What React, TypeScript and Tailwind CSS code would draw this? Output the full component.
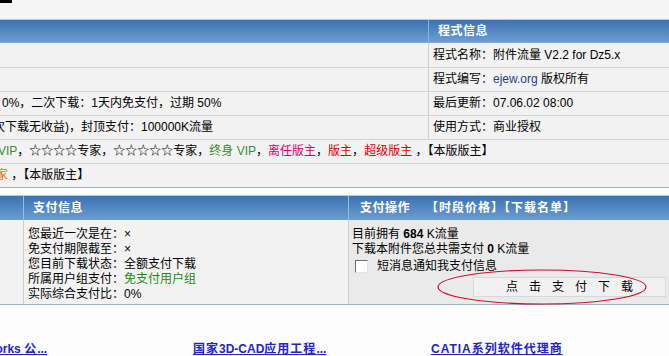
import React from 'react';

const font = "font-['Tahoma','Liberation_Sans','Noto_Sans_CJK_SC',sans-serif]";

const InfoRow = ({ left, right, h = 'h-[24px]' }: { left?: React.ReactNode; right?: React.ReactNode; h?: string }) => (
  <div className={`flex ${h} border-b border-[#d4d4d4]`}>
    <div className="w-[429px] border-r border-[#d0d0d0] flex items-center whitespace-nowrap overflow-hidden">{left}</div>
    <div className="flex-1 flex items-center pl-[4px] whitespace-nowrap">{right}</div>
  </div>
);

const WideRow = ({ children, last }: { children: React.ReactNode; last?: boolean }) => (
  <div
    className={`h-[24px] flex items-center whitespace-nowrap overflow-hidden border-b ${
      last ? 'border-[#a3afcc]' : 'border-[#d4d4d4]'
    }`}
  >
    {children}
  </div>
);

export default function App() {
  return (
    <div className={`${font} relative w-[669px] h-[356px] overflow-hidden bg-[#f5f5f5] text-[12px] leading-[15px] text-black`}>
      {/* top strip */}
      <div className="h-[19px]">
        <div className="w-[12px] h-[3px] bg-black" />
      </div>

      {/* program info table */}
      <div className="bg-[#f2f2f2]">
        <div className="flex h-[24px] border-t border-[#aecbe8] border-b border-b-[#86a6ca] bg-linear-to-b from-[#3b72b1] to-[#6c9dd2]">
          <div className="w-[429px] border-r border-[#90b2da]" />
          <div className="flex-1 flex items-center pl-[9px] pt-[1px] font-bold text-white tracking-[0.5px]">程式信息</div>
        </div>
        <InfoRow h="h-[25px]" right={<span className="pt-[1px]">程式名称：附件流量 V2.2 for Dz5.x</span>} />
        <InfoRow
          right={
            <span>
              程式编写：<span className="text-[#1f3f8f]">ejew.org</span> 版权所有
            </span>
          }
        />
        <InfoRow
          left={<span className="pl-[2px]">0%，二次下载：1天内免支付，过期 50%</span>}
          right={<span>最后更新：07.06.02 08:00</span>}
        />
        <InfoRow
          left={<span className="ml-[-7px]">次下载无收益)，封顶支付：100000K流量</span>}
          right={<span>使用方式：商业授权</span>}
        />
        <WideRow>
          <span className="ml-[-2px]">
            <span className="text-[#3a8a3a]">VIP</span>，☆☆☆☆专家，☆☆☆☆☆专家，
            <span className="text-[#3a8a3a]">终身 VIP</span>，<span className="text-[#d4006e]">离任版主</span>，
            <span className="text-[#e00000]">版主</span>，<span className="text-[#e00000]">超级版主</span> ，【本版版主】
          </span>
        </WideRow>
        <WideRow last>
          <span className="ml-[-4px]">
            <span className="text-[#ec6a2a]">家</span> ，【本版版主】
          </span>
        </WideRow>
      </div>

      {/* gap */}
      <div className="h-[7px] bg-[#fcfcfc]" />

      {/* payment table */}
      <div className="bg-[#f2f2f2]">
        <div className="flex h-[25px] border-t border-[#b3cde8] bg-linear-to-b from-[#3b72b1] to-[#6c9dd2] font-bold text-white">
          <div className="w-[24px] border-r border-[#9cbde2]" />
          <div className="w-[325px] border-r border-[#9cbde2] flex items-center pl-[9px] pt-[1px] tracking-[0.5px]">支付信息</div>
          <div className="flex-1 flex items-center pl-[11px] pt-[1px] whitespace-nowrap tracking-[0.5px]">
            支付操作<span className="ml-[16px] tracking-[1px]">【时段价格】【下载名单】</span>
          </div>
        </div>
        <div className="flex h-[85px] border-b border-[#9fb1cb]">
          <div className="w-[24px] border-r border-[#cfcfcf]" />
          <div className="w-[325px] border-r border-[#cfcfcf] pl-[4px] pt-[7px] whitespace-nowrap">
            <div>您最近一次是在：×</div>
            <div>免支付期限截至：×</div>
            <div>您目前下载状态：全额支付下载</div>
            <div>
              所属用户组支付：<span className="text-[#1b8a1b]">免支付用户组</span>
            </div>
            <div>实际综合支付比：0%</div>
          </div>
          <div className="flex-1 bg-[#eaeaea] pl-[3px] pt-[7px] whitespace-nowrap">
            <div>
              目前拥有 <b>684</b> K流量
            </div>
            <div>
              下载本附件您总共需支付 <b>0</b> K流量
            </div>
            <div className="flex items-center h-[18px] pl-[3px]">
              <div className="w-[13px] h-[13px] bg-white border border-t-[#6f6f6f] border-l-[#6f6f6f] border-b-[#e4e4e4] border-r-[#e4e4e4]" />
              <span className="ml-[9px]">短消息通知我支付信息</span>
            </div>
            <div className="flex justify-end pr-[3px] mt-[2px]">
              <div className="w-[193px] h-[20px] bg-[#f1f1f1] border border-[#d8d8d8] flex items-center justify-center tracking-[11px] pl-[11px]">
                点击支付下载
              </div>
            </div>
          </div>
        </div>
      </div>

      {/* related links */}
      <div className="h-[52px] bg-[#fcfcfc] pt-[36px]">
        <div className="flex ml-[-45px] font-bold text-[#2323c8] leading-[16px] whitespace-nowrap">
          <div className="w-[240px]">
            <span className="underline">
              SolidWorks <span className="tracking-[1px]">公</span>...
            </span>
          </div>
          <div className="w-[240px]">
            <span className="underline">
              <span className="tracking-[1px]">国家</span>3D-CAD<span className="tracking-[1px]">应用工程</span>...
            </span>
          </div>
          <div className="w-[240px]">
            <span className="underline tracking-[1px]">CATIA系列软件代理商</span>
          </div>
        </div>
      </div>

      {/* red ellipse drawn over the button */}
      <svg className="absolute left-[436px] top-[268px]" width="212" height="38" viewBox="0 0 212 38">
        <ellipse cx="106" cy="19" rx="104" ry="17" fill="none" stroke="#c8102e" strokeWidth="1.2" />
      </svg>
    </div>
  );
}
